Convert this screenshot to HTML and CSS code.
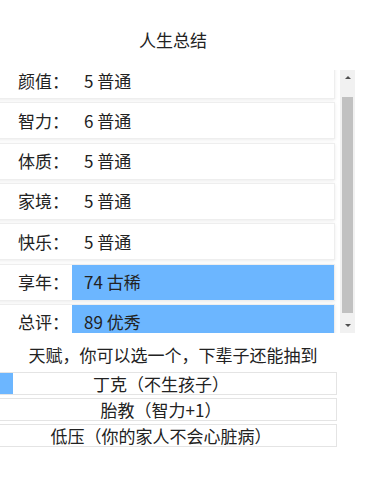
FILE: index.html
```html
<!DOCTYPE html>
<html lang="zh-CN">
<head>
  <meta charset="UTF-8">
  <meta name="viewport" content="width=device-width, initial-scale=1.0">
  <title>人生总结</title>
  <link rel="stylesheet" href="styles.css">
</head>
<body>

  <div class="summary">
    <h1>人生总结</h1>
    <div class="grade-box">
      <ul class="grade-list" id="grade-list">
        <li class="grade"><span class="name">颜值：</span><span class="value">5 普通</span></li>
        <li class="grade"><span class="name">智力：</span><span class="value">6 普通</span></li>
        <li class="grade"><span class="name">体质：</span><span class="value">5 普通</span></li>
        <li class="grade"><span class="name">家境：</span><span class="value">5 普通</span></li>
        <li class="grade"><span class="name">快乐：</span><span class="value">5 普通</span></li>
        <li class="grade good"><span class="name">享年：</span><span class="value">74 古稀</span></li>
        <li class="grade good"><span class="name">总评：</span><span class="value">89 优秀</span></li>
      </ul>
      <div class="scrollbar">
        <span class="scroll-btn"><i class="arrow-up"></i></span>
        <span class="scroll-track"><span class="scroll-thumb"></span></span>
        <span class="scroll-btn"><i class="arrow-down"></i></span>
      </div>
    </div>

    <h2>天赋，你可以选一个，下辈子还能抽到</h2>
    <ul class="talent-list">
      <li class="talent picked">丁克（不生孩子）</li>
      <li class="talent">胎教（智力+1）</li>
      <li class="talent">低压（你的家人不会心脏病）</li>
    </ul>
  </div>

  <script>
    // keep the list scrolled a little, as in the game
    document.getElementById('grade-list').scrollTop = 13;
  </script>

</body>
</html>
```

FILE: styles.css
```css
* {
  margin: 0;
  padding: 0;
  box-sizing: border-box;
}
body {
  font-family: "Noto Sans CJK SC", "Microsoft YaHei", sans-serif;
  font-size: 17px;
  color: #222;
  background-color: #fff;
  overflow: hidden;
}
.summary {
  padding-top: 28px;
}
h1 {
  font-size: 17px;
  font-weight: normal;
  line-height: 24px;
  text-align: center;
  width: 356px;
  margin-left: -5px;
}
.grade-box {
  display: flex;
  width: 360px;
  height: 263px;
  margin: 18px 0 0 -5px;
}
.grade-list {
  flex: 1;
  list-style: none;
  padding: 5px 5px 0 0;
  overflow: hidden;
}
.grade {
  display: flex;
  align-items: center;
  height: 37px;
  margin-bottom: 3.33px;
  background-color: #fff;
  border: 1px solid #eee;
  box-shadow: 0 1px 3px rgba(0, 0, 0, 0.08);
}
.grade.good {
  background: linear-gradient(to right, #fff 76px, #6cb6ff 76px);
}
.name {
  width: 76px;
  padding-right: 3px;
  text-align: right;
  line-height: 20px;
}
.value {
  flex: 1;
  padding-left: 12px;
  line-height: 20px;
}
.scrollbar {
  display: flex;
  flex-direction: column;
  width: 15px;
  background-color: #f1f1f1;
}
.scroll-btn {
  display: flex;
  align-items: center;
  justify-content: center;
  height: 15px;
}
.arrow-up,
.arrow-down {
  width: 0;
  height: 0;
  border-left: 3px solid transparent;
  border-right: 3px solid transparent;
}
.arrow-up {
  border-bottom: 3px solid #505050;
}
.arrow-down {
  border-top: 3px solid #505050;
}
.scroll-track {
  flex: 1;
  padding: 12px 2px 5px;
  display: flex;
}
.scroll-thumb {
  flex: 1;
  background-color: #c1c1c1;
}
h2 {
  font-size: 17px;
  font-weight: normal;
  line-height: 24px;
  text-align: center;
  width: 356px;
  margin: 10px 0 0 -5px;
}
.talent-list {
  list-style: none;
  width: 352px;
  margin: 5px 0 0 -15px;
}
.talent {
  height: 23px;
  margin-bottom: 3px;
  line-height: 21px;
  text-align: center;
  background-color: #fff;
  border: 1px solid #e4e4e4;
}
.talent.picked {
  background: linear-gradient(to right, #6cb6ff 27px, #fff 27px);
}
```
